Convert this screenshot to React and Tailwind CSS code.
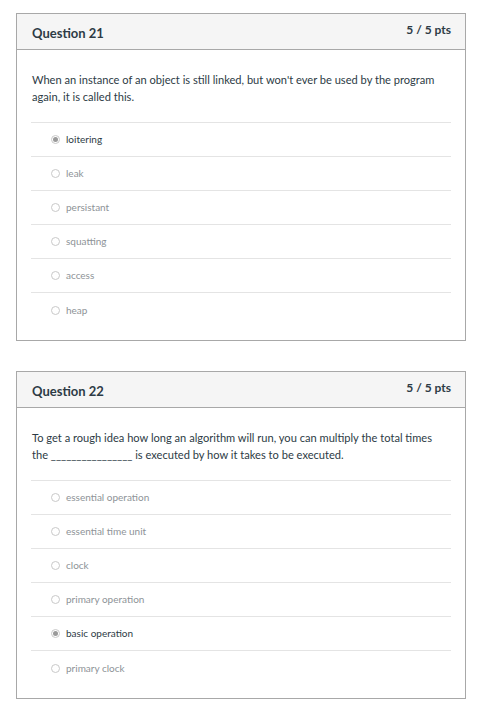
import React from 'react';

const questions = [
  {
    id: 21,
    text: "When an instance of an object is still linked, but won't ever be used by the program again, it is called this.",
    options: ['loitering', 'leak', 'persistant', 'squatting', 'access', 'heap'],
    selected: 0,
  },
  {
    id: 22,
    text: 'To get a rough idea how long an algorithm will run, you can multiply the total times the ________________ is executed by how it takes to be executed.',
    options: [
      'essential operation',
      'essential time unit',
      'clock',
      'primary operation',
      'basic operation',
      'primary clock',
    ],
    selected: 4,
  },
];

const Radio = ({ checked }) => (
  <span className="w-[9px] h-[9px] rounded-full border border-[#c9c9c9] bg-white flex items-center justify-center shrink-0">
    {checked && <span className="w-[5px] h-[5px] rounded-full bg-[#9a9a9a]" />}
  </span>
);

const QuestionCard = ({ q }) => (
  <div className="border border-[#a8a8a8] bg-white">
    <div className="h-[36px] bg-[#f5f5f5] border-b border-[#a8a8a8] flex items-start justify-between pl-[15px] pr-[14px]">
      <h3 className="text-[13px] font-bold text-[#2d3b45] mt-[11px] leading-[16px]">
        Question {q.id}
      </h3>
      <span className="text-[12px] font-bold text-[#2d3b45] mt-[9px] leading-[14px]">5 / 5 pts</span>
    </div>

    <div className="px-[14px] pb-[13px] pt-[21px]">
      <p className="text-[11.1px] leading-[17px] text-[#2d3b45] pl-[1px] pr-[12px] mb-[17px]">{q.text}</p>
      <div className="border-t border-[#e4e4e4]">
        {q.options.map((opt, i) => (
          <div
            key={opt}
            className={`h-[34px] flex items-center gap-[6px] pl-[20px] ${
              i < q.options.length - 1 ? 'border-b border-[#e4e4e4]' : ''
            }`}
          >
            <Radio checked={i === q.selected} />
            <span
              className={`text-[10px] ${i === q.selected ? 'text-[#2d3b45]' : 'text-[#8e9397]'}`}
            >
              {opt}
            </span>
          </div>
        ))}
      </div>
    </div>
  </div>
);

export default function App() {
  return (
    <div className="min-h-[715px] bg-white pt-[13px] pl-[16px] pr-[12px] flex flex-col gap-[30px]" style={{ fontFamily: 'Lato, "Open Sans", sans-serif' }}>
      {questions.map((q) => (
        <QuestionCard key={q.id} q={q} />
      ))}
    </div>
  );
}
